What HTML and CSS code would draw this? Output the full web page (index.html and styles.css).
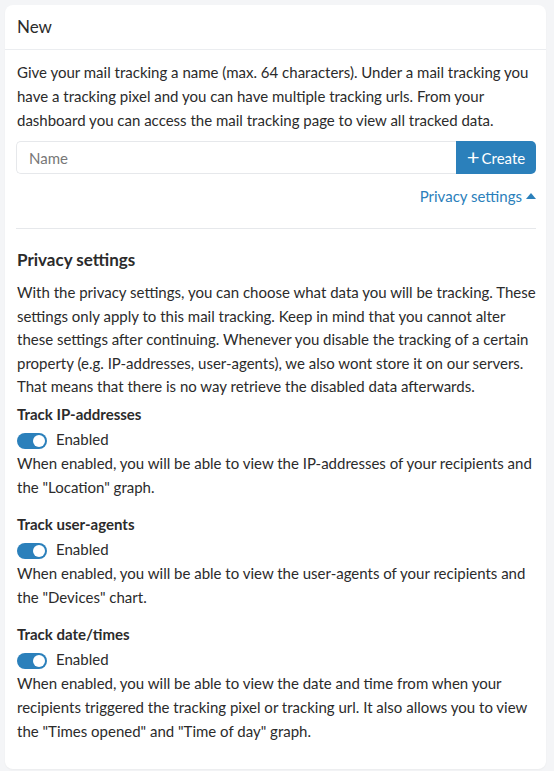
FILE: index.html
```html
<!DOCTYPE html>
<html>
<head>
<meta charset="utf-8">
<link rel="stylesheet" href="styles.css">
</head>
<body>
<div class="card">
  <div class="card-header">New</div>
  <div class="card-body">
    <p class="intro">Give your mail tracking a name (max. 64 characters). Under a mail tracking you have a tracking pixel and you can have multiple tracking urls. From your dashboard you can access the mail tracking page to view all tracked data.</p>
    <div class="input-group">
      <input class="name-input" type="text" placeholder="Name">
      <button class="btn-create"><span class="plus">+</span>Create</button>
    </div>
    <div class="link-row"><a class="privacy-link" href="#">Privacy settings <span class="caret"></span></a></div>
    <hr class="divider">
    <h2 class="section-title">Privacy settings</h2>
    <p class="section-text">With the privacy settings, you can choose what data you will be tracking. These settings only apply to this mail tracking. Keep in mind that you cannot alter these settings after continuing. Whenever you disable the tracking of a certain property (e.g. IP-addresses, user-agents), we also wont store it on our servers. That means that there is no way retrieve the disabled data afterwards.</p>

    <div class="option">
      <div class="option-title">Track IP-addresses</div>
      <div class="switch-row"><span class="switch"><span class="knob"></span></span><span class="switch-label">Enabled</span></div>
      <p class="option-text">When enabled, you will be able to view the IP-addresses of your recipients and the "Location" graph.</p>
    </div>
    <div class="option">
      <div class="option-title">Track user-agents</div>
      <div class="switch-row"><span class="switch"><span class="knob"></span></span><span class="switch-label">Enabled</span></div>
      <p class="option-text">When enabled, you will be able to view the user-agents of your recipients and the "Devices" chart.</p>
    </div>
    <div class="option">
      <div class="option-title">Track date/times</div>
      <div class="switch-row"><span class="switch"><span class="knob"></span></span><span class="switch-label">Enabled</span></div>
      <p class="option-text">When enabled, you will be able to view the date and time from when your recipients triggered the tracking pixel or tracking url. It also allows you to view the "Times opened" and "Time of day" graph.</p>
    </div>
  </div>
</div>
</body>
</html>
```
FILE: styles.css
```css
html, body {
  margin: 0;
  padding: 0;
}
body {
  background: #f4f5f7;
  font-family: Lato, "Noto Sans", sans-serif;
  color: #2b2b2b;
  font-size: 15px;
  padding: 5px 8px 6px 5px;
}
.card {
  background: #fff;
  border-radius: 8px;
  box-shadow: 0 1px 2px rgba(0,0,0,0.04);
}
.card-header {
  font-size: 17px;
  height: 44px;
  line-height: 44px;
  padding: 0 12px;
  border-bottom: 1px solid #ebedf0;
}
.card-body {
  padding: 10px 10px 26px 11px;
}
p { margin: 0; }
.intro {
  line-height: 24px;
  padding-left: 1px;
}
.input-group {
  display: flex;
  margin-top: 9px;
  height: 33px;
}
.name-input {
  flex: 1;
  border: 1px solid #e6e8eb;
  border-right: none;
  border-radius: 5px 0 0 5px;
  padding: 0 12px;
  font-family: inherit;
  font-size: 15px;
  color: #2b2b2b;
  outline: none;
}
.name-input::placeholder { color: #777; }
.btn-create {
  width: 80px;
  border: none;
  background: #2b80bb;
  color: #fff;
  font-family: inherit;
  font-size: 15px;
  border-radius: 0 5px 5px 0;
  padding: 0;
  display: flex;
  align-items: center;
  justify-content: center;
}
.plus {
  font-size: 22px;
  font-weight: 400;
  margin-right: 2px;
  line-height: 1;
  position: relative;
  top: -1px;
}
.link-row {
  display: flex;
  justify-content: flex-end;
  margin-top: 12px;
  height: 20px;
  line-height: 20px;
}
.privacy-link {
  color: #2b80bb;
  text-decoration: none;
  display: flex;
  align-items: center;
}
.caret {
  display: inline-block;
  width: 0;
  height: 0;
  border-left: 5px solid transparent;
  border-right: 5px solid transparent;
  border-bottom: 6px solid #2b80bb;
  margin-left: 4px;
}
.divider {
  border: none;
  border-top: 1px solid #e6e8eb;
  margin: 22px 0 0 0;
}
.section-title {
  font-size: 17px;
  font-weight: 700;
  margin: 20px 0 0 1px;
  line-height: 22px;
}
.section-text {
  margin-top: 10px;
  line-height: 23.6px;
  padding-left: 1px;
}
.option {
  margin-top: 4px;
  padding-left: 1px;
}
.option + .option {
  margin-top: 14px;
}
.option-title {
  font-weight: 700;
  line-height: 22px;
}
.switch-row {
  display: flex;
  align-items: center;
  height: 24px;
  margin-top: 4px;
}
.switch {
  width: 30px;
  height: 16px;
  border-radius: 8px;
  background: #2b80bb;
  position: relative;
  display: inline-block;
}
.knob {
  position: absolute;
  right: 2px;
  top: 2px;
  width: 12px;
  height: 12px;
  border-radius: 50%;
  background: #fff;
}
.switch-label {
  margin-left: 9px;
  position: relative;
  top: -2px;
}
.option-text {
  line-height: 24px;
  margin-top: -2px;
}
```
